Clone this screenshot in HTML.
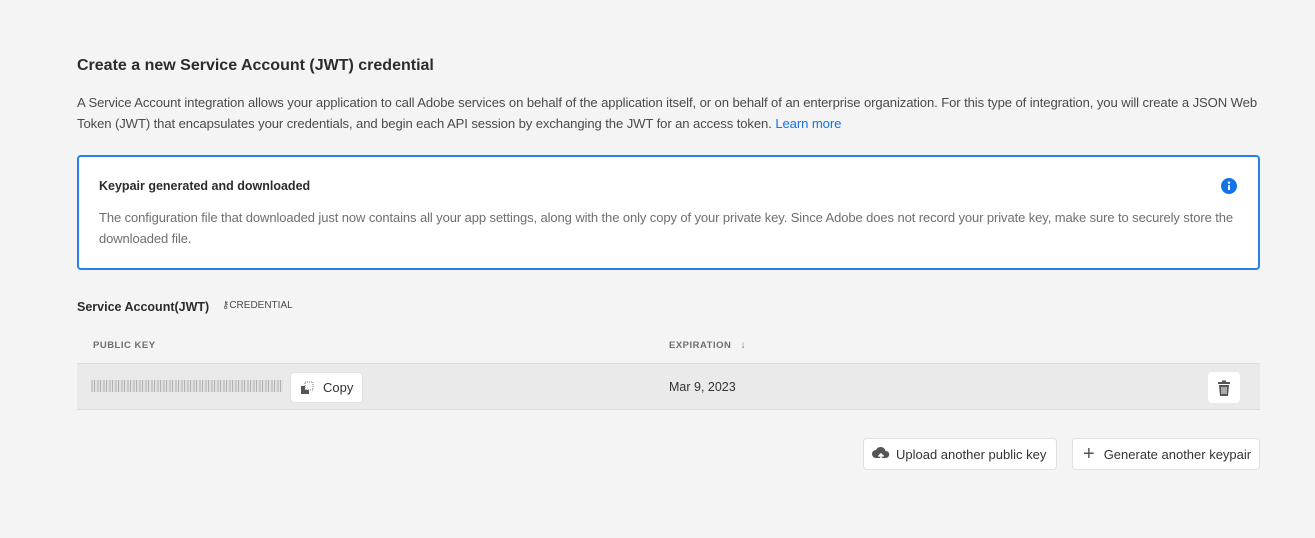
<!DOCTYPE html><html><head><style>
body{margin:0;background:#f4f4f4;font-family:"Liberation Sans",sans-serif;color:#2c2c2c;width:1315px;height:538px;overflow:hidden;position:relative}
.a{position:absolute;white-space:nowrap}
.btn{position:absolute;background:#fff;border:1px solid #e1e1e1;border-radius:4px;box-sizing:border-box;font-size:13px;color:#333;display:flex;align-items:center}
</style></head><body>
<div class="a" style="left:77px;top:57px;font-size:16px;font-weight:bold;color:#2c2c2c">Create a new Service Account (JWT) credential</div>
<div class="a" style="left:77px;top:92px;font-size:13.1px;line-height:21px;color:#4b4b4b;letter-spacing:-0.1px">A Service Account integration allows your application to call Adobe services on behalf of the application itself, or on behalf of an enterprise organization. For this type of integration, you will create a JSON Web<br>Token (JWT) that encapsulates your credentials, and begin each API session by exchanging the JWT for an access token. <span style="color:#1473e6">Learn more</span></div>
<div style="position:absolute;left:77px;top:155px;width:1183px;height:115px;box-sizing:border-box;border:2px solid #2680eb;border-radius:4px;background:#fff"></div>
<div class="a" style="left:99px;top:179px;font-size:12.5px;font-weight:bold;color:#2c2c2c">Keypair generated and downloaded</div>
<svg class="a" style="left:1221px;top:178px" width="16" height="16" viewBox="0 0 16 16"><circle cx="8" cy="8" r="8" fill="#1473e6"/><rect x="7" y="7" width="2" height="5" fill="#fff"/><circle cx="8" cy="4.7" r="1.2" fill="#fff"/></svg>
<div class="a" style="left:99px;top:207px;font-size:13px;line-height:21px;color:#6e6e6e;letter-spacing:-0.1px">The configuration file that downloaded just now contains all your app settings, along with the only copy of your private key. Since Adobe does not record your private key, make sure to securely store the<br>downloaded file.</div>
<div class="a" style="left:77px;top:300px;font-size:12.5px;font-weight:bold">Service Account(JWT)</div>
<div class="a" style="left:222px;top:300px;font-size:10px;color:#4b4b4b">⚷CREDENTIAL</div>
<div class="a" style="left:93px;top:340px;font-size:9.5px;font-weight:bold;color:#6e6e6e;letter-spacing:.5px">PUBLIC KEY</div>
<div class="a" style="left:669px;top:340px;font-size:9.5px;font-weight:bold;color:#6e6e6e;letter-spacing:.5px">EXPIRATION &nbsp;&nbsp;↓</div>
<div style="position:absolute;left:77px;top:363px;width:1183px;height:47px;background:#eaeaea;border-top:1px solid #ddd;border-bottom:1px solid #ddd;box-sizing:border-box"></div>
<div class="a" style="left:91px;top:380px;width:192px;height:12px;background:repeating-linear-gradient(90deg,#bbb 0 2px,#e0e0e0 2px 3px,#999 3px 4px,#ddd 4px 6px);opacity:.7"></div>
<div class="btn" style="left:290px;top:372px;width:73px;height:31px;padding-left:8px"><svg width="16" height="16" viewBox="0 0 16 16"><rect x="2" y="6" width="8" height="8" fill="#555"/><rect x="6" y="2" width="8" height="8" fill="#fff" stroke="#777" stroke-dasharray="1 1"/></svg><span style="margin-left:8px">Copy</span></div>
<div class="a" style="left:669px;top:380px;font-size:12.5px;color:#333">Mar 9, 2023</div>
<div class="btn" style="left:1208px;top:372px;width:32px;height:31px;justify-content:center;border:none"><svg width="14" height="16" viewBox="0 0 14 16"><rect x="1" y="2" width="12" height="2" fill="#555"/><rect x="5" y="0.5" width="4" height="2" fill="#555"/><path d="M2 5h10l-1 11H3z" fill="#555"/><path d="M5 7v7M7 7v7M9 7v7" stroke="#fff" stroke-width="1"/></svg></div>
<div class="btn" style="left:863px;top:438px;width:194px;height:32px;padding-left:8px"><svg width="18" height="16" viewBox="0 0 18 16"><path d="M4 12a4 4 0 0 1 0-8 5 5 0 0 1 9.5 1 3.5 3.5 0 0 1 0.5 7z" fill="#555"/><path d="M9 15V8M6.5 10.5L9 8l2.5 2.5" stroke="#fff" stroke-width="1.6" fill="none"/></svg><span style="margin-left:6px">Upload another public key</span></div>
<div class="btn" style="left:1072px;top:438px;width:188px;height:32px;padding-left:10px"><span style="font-size:20px;color:#555;line-height:1">+</span><span style="margin-left:9px">Generate another keypair</span></div>
</body></html>
